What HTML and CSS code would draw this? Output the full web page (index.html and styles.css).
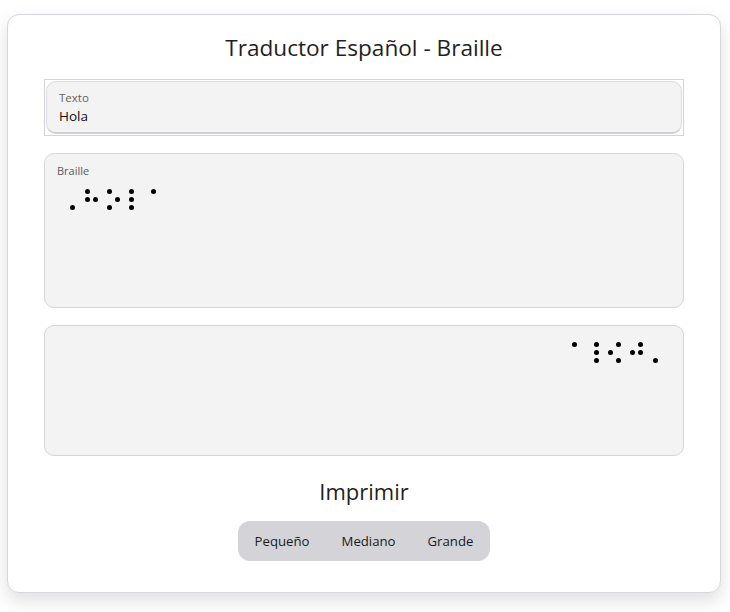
FILE: index.html
```html
<!DOCTYPE html>
<html lang="es">
<head>
<meta charset="utf-8">
<title>Traductor Español - Braille</title>
<link rel="stylesheet" href="styles.css">
</head>
<body>
<main class="card">
  <h1 class="title">Traductor Español - Braille</h1>

  <div class="field-frame">
    <label class="field">
      <span class="field-label">Texto</span>
      <input class="field-input" type="text" value="Hola">
    </label>
  </div>

  <section class="braille-box">
    <div class="box-label">Braille</div>
    <div class="braille-row" aria-label="⠠⠓⠕⠇⠁">
      <span class="cell"><i></i><i></i><i></i><i></i><i></i><i class="on"></i></span>
      <span class="cell"><i class="on"></i><i class="on"></i><i></i><i></i><i class="on"></i><i></i></span>
      <span class="cell"><i class="on"></i><i></i><i class="on"></i><i></i><i class="on"></i><i></i></span>
      <span class="cell"><i class="on"></i><i class="on"></i><i class="on"></i><i></i><i></i><i></i></span>
      <span class="cell"><i class="on"></i><i></i><i></i><i></i><i></i><i></i></span>
    </div>
  </section>

  <section class="braille-box mirror-box">
    <div class="braille-row mirrored" aria-label="⠠⠓⠕⠇⠁ (espejo)">
      <span class="cell"><i></i><i></i><i></i><i></i><i></i><i class="on"></i></span>
      <span class="cell"><i class="on"></i><i class="on"></i><i></i><i></i><i class="on"></i><i></i></span>
      <span class="cell"><i class="on"></i><i></i><i class="on"></i><i></i><i class="on"></i><i></i></span>
      <span class="cell"><i class="on"></i><i class="on"></i><i class="on"></i><i></i><i></i><i></i></span>
      <span class="cell"><i class="on"></i><i></i><i></i><i></i><i></i><i></i></span>
    </div>
  </section>

  <h2 class="print-title">Imprimir</h2>
  <div class="size-group">
    <button class="size-btn">Pequeño</button>
    <button class="size-btn">Mediano</button>
    <button class="size-btn">Grande</button>
  </div>
</main>
</body>
</html>
```

FILE: styles.css
```css
* { box-sizing: border-box; }

html, body {
  margin: 0;
  padding: 0;
  background: #ffffff;
}

body {
  font-family: "Open Sans", "Noto Sans", "Liberation Sans", sans-serif;
  color: #242424;
  padding: 14px 9px 0 7px;
  height: 612px;
  overflow: hidden;
}

.card {
  width: 714px;
  height: 579px;
  border: 1px solid #d6d6dc;
  border-radius: 12px;
  background: #ffffff;
  box-shadow: 0 8px 18px rgba(0, 0, 0, 0.13);
  padding: 17px 36px 31px 36px;
  display: flex;
  flex-direction: column;
  align-items: stretch;
}

.title {
  margin: 0;
  font-weight: 400;
  font-size: 22.6px;
  line-height: 32px;
  text-align: center;
  color: #1f1f1f;
}

.field-frame {
  margin-top: 15px;
  border: 1px solid #d4d4da;
  padding: 1px;
  height: 57px;
}

.field {
  display: flex;
  flex-direction: column;
  height: 53px;
  background: #f3f3f3;
  border: 1px solid #dedee2;
  border-bottom: 2px solid #cfcfd5;
  border-radius: 10px;
  padding: 8px 12px 6px 12px;
}

.field-label {
  font-size: 11.5px;
  line-height: 16px;
  color: #616161;
}

.field-input {
  font-family: inherit;
  font-size: 13.5px;
  line-height: 20px;
  height: 20px;
  padding: 0;
  margin: 0;
  border: none;
  background: transparent;
  color: #111111;
  outline: none;
}

.braille-box {
  margin-top: 17px;
  height: 155px;
  border: 1px solid #d6d6d8;
  border-radius: 10px;
  background: #f3f3f3;
  padding: 10px 12px 0 12px;
}

.box-label {
  font-size: 11px;
  line-height: 14px;
  color: #5c5c5c;
}

.braille-row {
  display: flex;
  gap: 9px;
  margin-top: 11px;
  padding-left: 5px;
}

.mirror-box {
  height: 131px;
  padding: 16px 0 0 0;
}

.mirrored {
  margin-top: 0;
  padding-left: 17px;
  transform: scaleX(-1);
}

.cell {
  display: grid;
  grid-template-columns: repeat(2, 5px);
  grid-template-rows: repeat(3, 5px);
  grid-auto-flow: column;
  gap: 3px;
}

.cell:first-child {
  margin-right: 1px;
}

.cell i {
  display: block;
  width: 5px;
  height: 5px;
  border-radius: 50%;
}

.cell i.on {
  background: #000000;
}

.print-title {
  margin: 20px 0 0 0;
  font-weight: 400;
  font-size: 22px;
  line-height: 30px;
  text-align: center;
  color: #1f1f1f;
}

.size-group {
  margin: 15px auto 0 auto;
  display: flex;
  background: #d4d4d8;
  border-radius: 12px;
  height: 40px;
  padding: 0 1px;
}

.size-btn {
  font-family: inherit;
  font-size: 13.2px;
  color: #1a1a1a;
  background: transparent;
  border: none;
  padding: 0 16px;
  height: 40px;
  cursor: pointer;
}
```
